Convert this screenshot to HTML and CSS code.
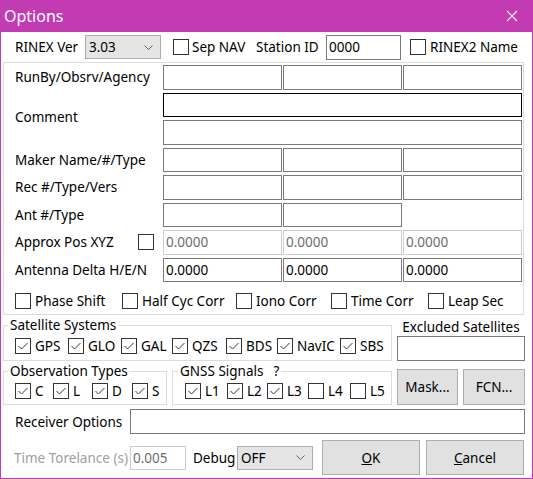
FILE: index.html
```html
<!DOCTYPE html>
<html>
<head>
<meta charset="utf-8">
<link rel="stylesheet" href="styles.css">
</head>
<body>
<div class="win">
  <div class="title">
    <span class="title-text">Options</span>
    <svg class="close" width="12" height="12" viewBox="0 0 12 12"><path d="M1 1 L11 11 M11 1 L1 11" stroke="#fff" stroke-width="1.1" fill="none"/></svg>
  </div>
  <div class="body">
    <div class="row1">
      <span class="lbl-ver">RINEX Ver</span>
      <div class="combo ver"><span>3.03</span><svg class="chev" width="9" height="5" viewBox="0 0 9 5"><path d="M0.5 0.5 L4.5 4.5 L8.5 0.5" stroke="#606060" fill="none"/></svg></div>
      <label class="chk sepnav"><span class="cb"></span>Sep NAV</label>
      <span class="lbl-sid">Station ID</span>
      <div class="edit sid">0000</div>
      <label class="chk r2"><span class="cb"></span>RINEX2 Name</label>
    </div>

    <div class="group main">
      <div class="grid">
        <div class="glabel">RunBy/Obsrv/Agency</div>
        <div class="edit"></div><div class="edit"></div><div class="edit"></div>

        <div class="glabel comment">Comment</div>
        <div class="edit focus span3"></div>
        <div class="edit span3"></div>

        <div class="glabel">Maker Name/#/Type</div>
        <div class="edit"></div><div class="edit"></div><div class="edit"></div>

        <div class="glabel">Rec #/Type/Vers</div>
        <div class="edit"></div><div class="edit"></div><div class="edit"></div>

        <div class="glabel">Ant #/Type</div>
        <div class="edit"></div><div class="edit"></div><div></div>

        <div class="glabel approx"><span>Approx Pos XYZ</span><span class="cb"></span></div>
        <div class="edit dis">0.0000</div><div class="edit dis">0.0000</div><div class="edit dis">0.0000</div>

        <div class="glabel">Antenna Delta H/E/N</div>
        <div class="edit">0.0000</div><div class="edit">0.0000</div><div class="edit">0.0000</div>
      </div>
      <div class="opts">
        <label class="chk"><span class="cb"></span>Phase Shift</label>
        <label class="chk"><span class="cb"></span>Half Cyc Corr</label>
        <label class="chk"><span class="cb"></span>Iono Corr</label>
        <label class="chk"><span class="cb"></span>Time Corr</label>
        <label class="chk"><span class="cb"></span>Leap Sec</label>
      </div>
    </div>

    <div class="lower">
      <fieldset class="fs sat">
        <legend>Satellite Systems</legend>
        <div class="cbrow satrow">
          <label class="chk"><span class="cb on"><svg viewBox="0 0 14 14"><path d="M2.5 7 L5.5 10 L11.5 4"/></svg></span>GPS</label>
          <label class="chk"><span class="cb on"><svg viewBox="0 0 14 14"><path d="M2.5 7 L5.5 10 L11.5 4"/></svg></span>GLO</label>
          <label class="chk"><span class="cb on"><svg viewBox="0 0 14 14"><path d="M2.5 7 L5.5 10 L11.5 4"/></svg></span>GAL</label>
          <label class="chk"><span class="cb on"><svg viewBox="0 0 14 14"><path d="M2.5 7 L5.5 10 L11.5 4"/></svg></span>QZS</label>
          <label class="chk"><span class="cb on"><svg viewBox="0 0 14 14"><path d="M2.5 7 L5.5 10 L11.5 4"/></svg></span>BDS</label>
          <label class="chk"><span class="cb on"><svg viewBox="0 0 14 14"><path d="M2.5 7 L5.5 10 L11.5 4"/></svg></span>NavIC</label>
          <label class="chk"><span class="cb on"><svg viewBox="0 0 14 14"><path d="M2.5 7 L5.5 10 L11.5 4"/></svg></span>SBS</label>
        </div>
      </fieldset>
      <div class="excl">
        <span class="excl-lbl">Excluded Satellites</span>
        <div class="edit excl-in"></div>
      </div>

      <div class="pair">
        <fieldset class="fs obs">
          <legend>Observation Types</legend>
          <div class="cbrow obsrow">
            <label class="chk"><span class="cb on"><svg viewBox="0 0 14 14"><path d="M2.5 7 L5.5 10 L11.5 4"/></svg></span>C</label>
            <label class="chk"><span class="cb on"><svg viewBox="0 0 14 14"><path d="M2.5 7 L5.5 10 L11.5 4"/></svg></span>L</label>
            <label class="chk"><span class="cb on"><svg viewBox="0 0 14 14"><path d="M2.5 7 L5.5 10 L11.5 4"/></svg></span>D</label>
            <label class="chk"><span class="cb on"><svg viewBox="0 0 14 14"><path d="M2.5 7 L5.5 10 L11.5 4"/></svg></span>S</label>
          </div>
        </fieldset>
        <fieldset class="fs gnss">
          <legend>GNSS Signals<span class="q">?</span></legend>
          <div class="cbrow gnssrow">
            <label class="chk"><span class="cb on"><svg viewBox="0 0 14 14"><path d="M2.5 7 L5.5 10 L11.5 4"/></svg></span>L1</label>
            <label class="chk"><span class="cb on"><svg viewBox="0 0 14 14"><path d="M2.5 7 L5.5 10 L11.5 4"/></svg></span>L2</label>
            <label class="chk"><span class="cb on"><svg viewBox="0 0 14 14"><path d="M2.5 7 L5.5 10 L11.5 4"/></svg></span>L3</label>
            <label class="chk"><span class="cb"></span>L4</label>
            <label class="chk"><span class="cb"></span>L5</label>
          </div>
        </fieldset>
      </div>
      <div class="btns">
        <div class="btn mask">Mask...</div>
        <div class="btn fcn">FCN...</div>
      </div>
    </div>

    <div class="recv">
      <span class="recv-lbl">Receiver Options</span>
      <div class="edit recv-in"></div>
    </div>

    <div class="bottom">
      <span class="time-lbl">Time Torelance (s)</span>
      <div class="edit dis time-in">0.005</div>
      <span class="dbg-lbl">Debug</span>
      <div class="combo dbg"><span>OFF</span><svg class="chev" width="9" height="5" viewBox="0 0 9 5"><path d="M0.5 0.5 L4.5 4.5 L8.5 0.5" stroke="#606060" fill="none"/></svg></div>
      <div class="btn big ok"><span><u>O</u>K</span></div>
      <div class="btn big cancel"><span><u>C</u>ancel</span></div>
    </div>
  </div>
</div>
</body>
</html>
```

FILE: styles.css
```css
* { box-sizing: border-box; }
html, body { margin: 0; padding: 0; }
body {
  width: 533px;
  height: 479px;
  overflow: hidden;
  background: #fff;
  font-family: "Noto Sans", "Open Sans", sans-serif;
  font-size: 13.5px;
  color: #000;
}
.win {
  width: 533px;
  height: 479px;
  border: 1px solid #C23BB2;
  border-top: 0;
  display: flex;
  flex-direction: column;
}
.title {
  height: 32px;
  flex: none;
  background: #C23BB2;
  color: #fff;
  display: flex;
  align-items: center;
  justify-content: space-between;
  padding: 0 14px 0 3px;
  font-size: 16px;
}
.close { display: block; }
.body {
  flex: 1;
  padding: 0 7px 0 2px;
}

/* generic controls */
.edit {
  border: 1px solid #7A7A7A;
  background: #fff;
  padding: 0 2px;
  display: flex;
  align-items: center;
  white-space: nowrap;
}
.edit.focus { border-color: #000; }
.edit.dis { border-color: #CCCCCC; color: #6D6D6D; }
.chk {
  display: flex;
  align-items: center;
  gap: 4px;
  white-space: nowrap;
}
.cb {
  width: 16px;
  height: 16px;
  flex: none;
  border: 1px solid #333;
  background: #fff;
  display: inline-flex;
}
.cb svg { width: 14px; height: 14px; }
.cb svg path { stroke: #333; stroke-width: 1; fill: none; }
.combo {
  height: 24px;
  background: #E5E5E5;
  border: 1px solid #ADADAD;
  display: flex;
  align-items: center;
  justify-content: space-between;
  padding: 0 7px 0 3px;
}
.btn {
  background: #E1E1E1;
  border: 1px solid #ADADAD;
  display: flex;
  align-items: center;
  justify-content: center;
}

/* row 1 */
.row1 {
  height: 30px;
  display: flex;
  align-items: center;
  padding-left: 12px;
}
.lbl-ver { width: 70px; }
.combo.ver { width: 76px; }
.sepnav { width: 83px; margin-left: 12px; gap: 3px; }
.lbl-sid { width: 70px; }
.edit.sid { width: 75px; height: 25px; }
.r2 { margin-left: 9px; }

/* main group */
.group.main {
  border: 1px solid #DCDCDC;
  margin-right: 1px;
  padding: 2px 1px 0 0;
}
.grid {
  display: grid;
  grid-template-columns: 158px 119px 119px 119px;
  column-gap: 1px;
  grid-auto-rows: 24.5px;
  row-gap: 3px;
}
.glabel {
  padding-left: 11px;
  display: flex;
  align-items: center;
  white-space: nowrap;
}
.glabel.comment { grid-row: span 2; padding-bottom: 4px; }
.span3 { grid-column: span 3; }
.glabel.approx { justify-content: space-between; padding-right: 8px; }
.opts {
  display: grid;
  grid-template-columns: 107px 114px 95px 97px auto;
  padding-left: 11px;
  height: 26px;
  margin-top: 6px;
  align-items: center;
}

/* lower */
.lower {
  display: grid;
  grid-template-columns: 389px 128px;
  column-gap: 5px;
  row-gap: 2px;
  margin-top: 2px;
}
.fs {
  margin: 0;
  padding: 0 0 1px 0;
  border: 1px solid #DCDCDC;
  min-width: 0;
}
.fs legend {
  padding: 0 2px;
  margin-left: 4px;
  line-height: 16px;
}
.fs.gnss legend { margin-left: 5px; }
.q { margin-left: 10px; }
.cbrow {
  display: grid;
  align-items: center;
  height: 25px;
  padding-left: 11px;
}
.satrow { grid-template-columns: 53px 53px 51px 54px 51px 63px auto; }
.obsrow { grid-template-columns: 38px 39px 40px auto; height: 24px; }
.gnssrow { grid-template-columns: 42px 40px 41px 42px auto; height: 24px; padding-left: 12px; }
.excl {
  display: flex;
  flex-direction: column;
  align-items: center;
}
.excl-lbl { line-height: 16px; margin-top: 2px; }
.excl-in { width: 100%; height: 25px; margin-top: 1px; }
.pair {
  display: grid;
  grid-template-columns: 164px 220px;
  column-gap: 5px;
}
.btns {
  display: flex;
  gap: 5px;
  padding-top: 6px;
}
.btn.mask { width: 61px; height: 36px; }
.btn.fcn { width: 62px; height: 36px; }

.recv {
  display: flex;
  align-items: center;
  margin-top: 4px;
  padding-left: 12px;
}
.recv-lbl { width: 115px; }
.recv-in { flex: 1; height: 25px; }

.bottom {
  display: flex;
  align-items: center;
  margin-top: 6px;
  height: 35px;
  padding-left: 11px;
}
.time-lbl { width: 116px; color: #A0A0A0; white-space: nowrap; }
.time-in { width: 56px; height: 24px; }
.dbg-lbl { width: 44px; margin-left: 7px; }
.combo.dbg { width: 76px; }
.btn.big { width: 98px; height: 35px; }
.btn.ok { margin-left: 9px; }
.btn.cancel { margin-left: 6px; }
```
